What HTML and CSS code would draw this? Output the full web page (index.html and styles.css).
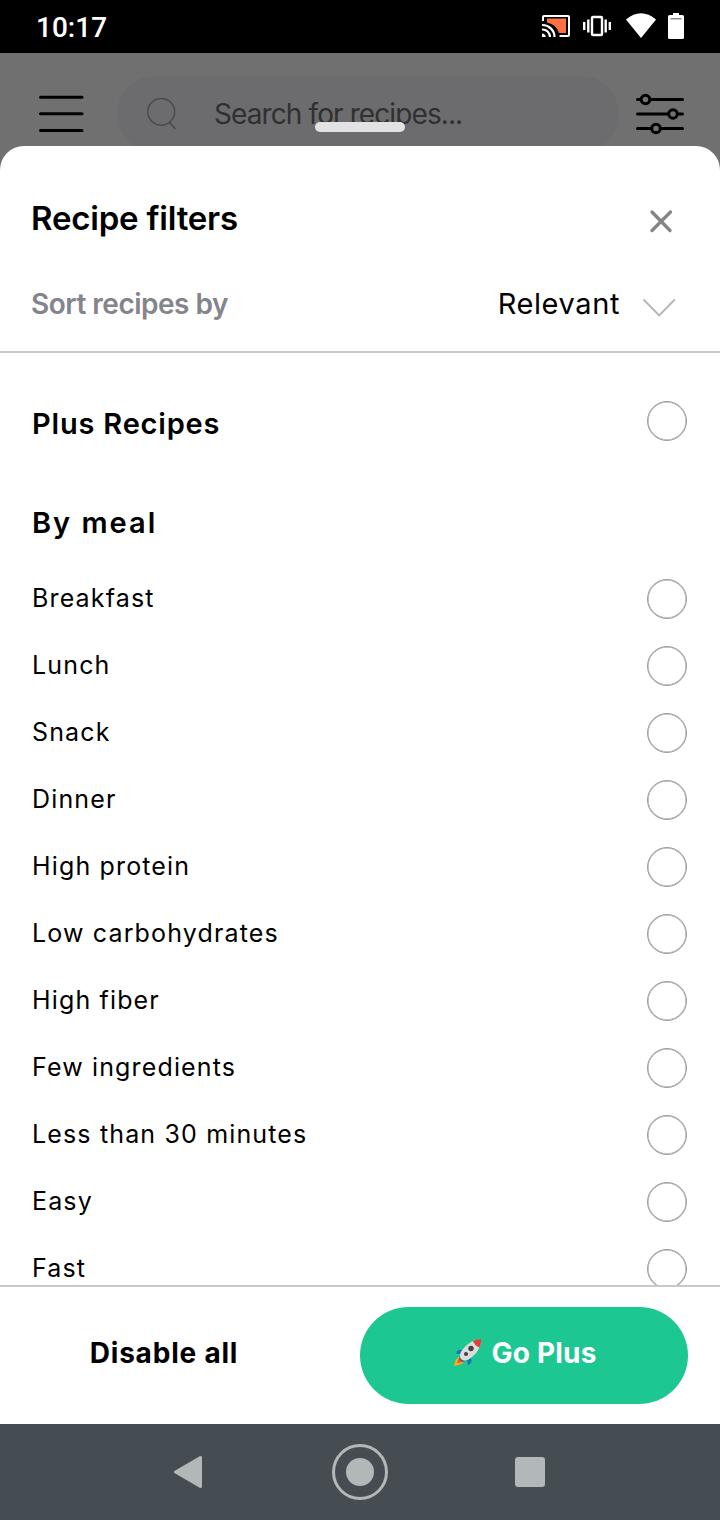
FILE: index.html
```html
<!DOCTYPE html>
<html lang="en">
<head>
    <meta charset="UTF-8">
    <meta name="viewport" content="width=device-width, initial-scale=1.0">
    <title>Recipe filters</title>
    <link rel="stylesheet" href="styles.css">
</head>
<body>
    <div class="status-bar">
        <span class="clock">10:17</span>
        <svg class="status-icons" width="146" height="32" viewBox="540 10 146 32">
            <!-- cast -->
            <path d="M547 18.5H566V33H559Q557 25 547 22.5Z" fill="#ff7043"/>
            <path d="M543 21V17Q543 16 544 16H568Q569 16 569 17V35Q569 36 568 36H559.5" fill="none" stroke="#fff" stroke-width="2"/>
            <path d="M542 25A12 12 0 0 1 554.500 37M542 29.500A7.500 7.500 0 0 1 550 37" fill="none" stroke="#fff" stroke-width="2.200"/>
            <path d="M542 33.500A4 4 0 0 1 545.800 37H542Z" fill="#fff"/>
            <!-- vibrate -->
            <rect x="592" y="17" width="10" height="18" rx="1" fill="none" stroke="#fff" stroke-width="2.400"/>
            <path d="M584.200 22V30M588.300 19.500V32.500M605.700 19.500V32.500M609.800 22V30" stroke="#fff" stroke-width="2.400"/>
            <!-- wifi -->
            <path d="M626 19.500Q641 7 656 19.500L641 38Z" fill="#fff"/>
            <!-- battery -->
            <path d="M673 13H679V15H682.500Q684 15 684 16.500V37.500Q684 39 682.500 39H669.500Q668 39 668 37.500V16.500Q668 15 669.500 15H673Z" fill="#fff"/>
            <path d="M670.500 18.800H681.500" stroke="#555" stroke-width="1"/>
        </svg>
    </div>

    <div class="app-bar">
        <svg class="menu-icon" width="46" height="40" viewBox="38 94 46 40">
            <path d="M40.500 97.300H82M40.500 113.800H82M40.500 130.500H82" stroke="#000" stroke-width="3" stroke-linecap="round"/>
        </svg>
        <div class="search">
            <svg width="32" height="34" viewBox="146 97 32 34">
                <circle cx="161.200" cy="111.800" r="13.400" fill="none" stroke="#4b4b4c" stroke-width="1.500"/>
                <path d="M169 122L175.500 129" stroke="#4b4b4c" stroke-width="1.700"/>
            </svg>
            <span class="search-text">Search for recipes...</span>
        </div>
        <svg class="filter-icon" width="48" height="44" viewBox="636 92 48 44">
            <path d="M637.500 99.500H682.500M637.500 114H682.500M637.500 128.500H682.500" stroke="#000" stroke-width="3" stroke-linecap="round"/>
            <g fill="#707070" stroke="#000" stroke-width="3">
                <circle cx="645.500" cy="99.500" r="4.300"/>
                <circle cx="673" cy="114" r="4.300"/>
                <circle cx="656" cy="128.500" r="4.300"/>
            </g>
        </svg>
        <div class="handle"></div>
    </div>

    <div class="sheet">
        <div class="sheet-header">
            <div class="title-row">
                <h1>Recipe filters</h1>
                <svg class="close" width="24" height="24" viewBox="649 209 24 24">
                    <path d="M652 212L670 230.500M670.500 212L652 230.500" stroke="#858585" stroke-width="3.300" stroke-linecap="round"/>
                </svg>
            </div>
            <div class="sort-row">
                <span class="sort-label">Sort recipes by</span>
                <span class="sort-value">Relevant</span>
                <svg width="34" height="20" viewBox="642 297 34 20">
                    <path d="M643.500 299.500L659.200 315.500L674.800 299.500" fill="none" stroke="#b4b4b4" stroke-width="1.800"/>
                </svg>
            </div>
        </div>

        <div class="filters">
            <div class="row plus"><h2>Plus Recipes</h2><i class="radio"></i></div>
            <h2 class="group">By meal</h2>
            <div class="row"><span>Breakfast</span><i class="radio"></i></div>
            <div class="row"><span>Lunch</span><i class="radio"></i></div>
            <div class="row"><span>Snack</span><i class="radio"></i></div>
            <div class="row"><span>Dinner</span><i class="radio"></i></div>
            <div class="row"><span>High protein</span><i class="radio"></i></div>
            <div class="row"><span>Low carbohydrates</span><i class="radio"></i></div>
            <div class="row"><span>High fiber</span><i class="radio"></i></div>
            <div class="row"><span>Few ingredients</span><i class="radio"></i></div>
            <div class="row"><span>Less than 30 minutes</span><i class="radio"></i></div>
            <div class="row"><span>Easy</span><i class="radio"></i></div>
            <div class="row"><span>Fast</span><i class="radio"></i></div>
        </div>

        <div class="actions">
            <button class="disable">Disable all</button>
            <button class="go-plus">
                <svg width="30" height="30" viewBox="0 0 30 30">
                    <path d="M9 12Q4 11 3 16L8 16ZM18 20Q20 25 15 27L14 22Z" fill="#1976b8"/>
                    <path d="M6 19Q2 21 1 28Q8 27 11 24Z" fill="#f9a825"/>
                    <path d="M7 20Q4 22 4 25Q8 25 10 23Z" fill="#e65c2c"/>
                    <path d="M7 18L12 23L9 24L6 21Z" fill="#5d5a59"/>
                    <path d="M8 21Q5 17 10 11Q17 2 28 1Q28 12 19 19Q12 25 8 21Z" fill="#dcdcdc"/>
                    <path d="M20 3Q24 1 28 1Q28.500 5 26.500 9.500Q22 8 20 3Z" fill="#df3f3d"/>
                    <circle cx="18" cy="10.500" r="2.700" fill="#424242"/>
                    <circle cx="13" cy="16" r="2" fill="#424242"/>
                </svg>
                <span>Go Plus</span>
            </button>
        </div>
    </div>

    <div class="nav-bar">
        <svg width="30" height="34" viewBox="0 0 30 34">
            <path d="M2.500 17L27.500 2.500V31.500Z" fill="#b2b7b8" stroke="#b2b7b8" stroke-width="3" stroke-linejoin="round"/>
        </svg>
        <svg width="58" height="58" viewBox="0 0 58 58">
            <circle cx="29" cy="29" r="26.500" fill="none" stroke="#b2b7b8" stroke-width="3"/>
            <circle cx="29" cy="29" r="14" fill="#b2b7b8"/>
        </svg>
        <div class="recent"></div>
    </div>
</body>
</html>
```
FILE: styles.css
```css
* {
    box-sizing: border-box;
}

body {
    margin: 0;
    width: 720px;
    height: 1520px;
    display: flex;
    flex-direction: column;
    overflow: hidden;
    background: #707070;
    color: #000;
    font-family: Inter, "Open Sans", sans-serif;
}

h1, h2 {
    margin: 0;
    font-weight: 600;
}

svg {
    display: block;
    flex: none;
}

.status-bar {
    height: 53px;
    flex: none;
    padding: 0 34px 0 36px;
    display: flex;
    align-items: center;
    justify-content: space-between;
    background: #000;
    color: #fff;
}

.status-icons {
    margin-top: -1px;
}

.clock {
    font-family: Roboto, sans-serif;
    font-size: 28px;
    font-weight: 500;
    line-height: 53px;
    padding-top: 2px;
}

/* App bar behind the sheet */
.app-bar {
    position: relative;
    height: 93px;
    flex: none;
    display: flex;
    align-items: flex-start;
    padding: 23px 36px 0 38px;
}

.menu-icon {
    margin-top: 18px;
}

.search {
    width: 502px;
    height: 76px;
    margin: 0 17px 0 33px;
    padding-left: 29px;
    display: flex;
    align-items: center;
    border-radius: 38px;
    background: #6c6c6e;
}

.search-text {
    margin-left: 36px;
    color: #303030;
    font-size: 28px;
    line-height: 74px;
    letter-spacing: -0.9px;
}

.filter-icon {
    margin-top: 16px;
}

.handle {
    position: absolute;
    left: 315px;
    top: 69px;
    width: 90px;
    height: 10px;
    border-radius: 5px;
    background: #e2e2e2;
}

/* Sheet */
.sheet {
    position: relative;
    height: 1278px;
    flex: none;
    display: flex;
    flex-direction: column;
    overflow: hidden;
    background: #fff;
    border-radius: 24px 24px 0 0;
}

.sheet-header {
    height: 207px;
    flex: none;
    padding-top: 42px;
    border-bottom: 2px solid #c8c8c8;
}

.title-row {
    height: 60px;
    display: flex;
    align-items: center;
    justify-content: space-between;
    padding: 0 47px 0 31px;
}

.title-row h1 {
    font-size: 33px;
    letter-spacing: -0.2px;
}

.close {
    margin-top: 6px;
}

.sort-row {
    height: 60px;
    margin-top: 26px;
    display: flex;
    align-items: center;
    padding: 0 44px 0 31px;
}

.sort-label {
    flex: 1;
    color: #84848c;
    font-size: 28px;
    font-weight: 600;
    letter-spacing: -0.5px;
}

.sort-value {
    margin-right: 22px;
    padding-bottom: 2px;
    font-size: 29px;
    letter-spacing: 0.6px;
}

.sort-row svg {
    margin-top: 6px;
}

.filters {
    flex: 1;
    min-height: 0;
    overflow: hidden;
}

.filters h2 {
    font-size: 29px;
    letter-spacing: 0.8px;
}

.row {
    height: 67px;
    display: flex;
    align-items: center;
    justify-content: space-between;
    padding: 0 33px 0 32px;
}

.row span {
    padding-bottom: 2px;
    font-size: 25px;
    letter-spacing: 1.15px;
}

.row.plus {
    height: 136px;
}

.row.plus h2 {
    padding-top: 5px;
}

.filters .group {
    margin: 0 32px 9.5px;
    line-height: 67px;
    letter-spacing: 2px;
}

.radio {
    width: 40px;
    height: 40px;
    border: 1px solid #9c9ca1;
    border-radius: 50%;
    box-shadow: inset 0 0 0 0.5px #9c9ca1;
}

.actions {
    height: 139px;
    flex: none;
    display: flex;
    align-items: flex-start;
    padding: 20px 32px 0 0;
    border-top: 2px solid #c8c8c8;
}

button {
    height: 97px;
    padding: 0 0 5px;
    border: none;
    background: none;
    color: #000;
    font-family: inherit;
    font-size: 28px;
    font-weight: 700;
}

.disable {
    width: 328px;
    margin-right: 32px;
    letter-spacing: 0.8px;
}

.go-plus {
    width: 328px;
    display: flex;
    align-items: center;
    justify-content: center;
    gap: 8px;
    padding-left: 2px;
    border-radius: 49px;
    background: #1cc792;
    color: #fff;
    letter-spacing: 0.2px;
}

/* Android navigation */
.nav-bar {
    height: 96px;
    flex: none;
    display: flex;
    align-items: center;
    padding-left: 173px;
    background: #454d53;
}

.nav-bar svg + svg {
    margin: 0 126px 0 128px;
}

.recent {
    width: 30px;
    height: 30px;
    border-radius: 3px;
    background: #b2b7b8;
}
```
